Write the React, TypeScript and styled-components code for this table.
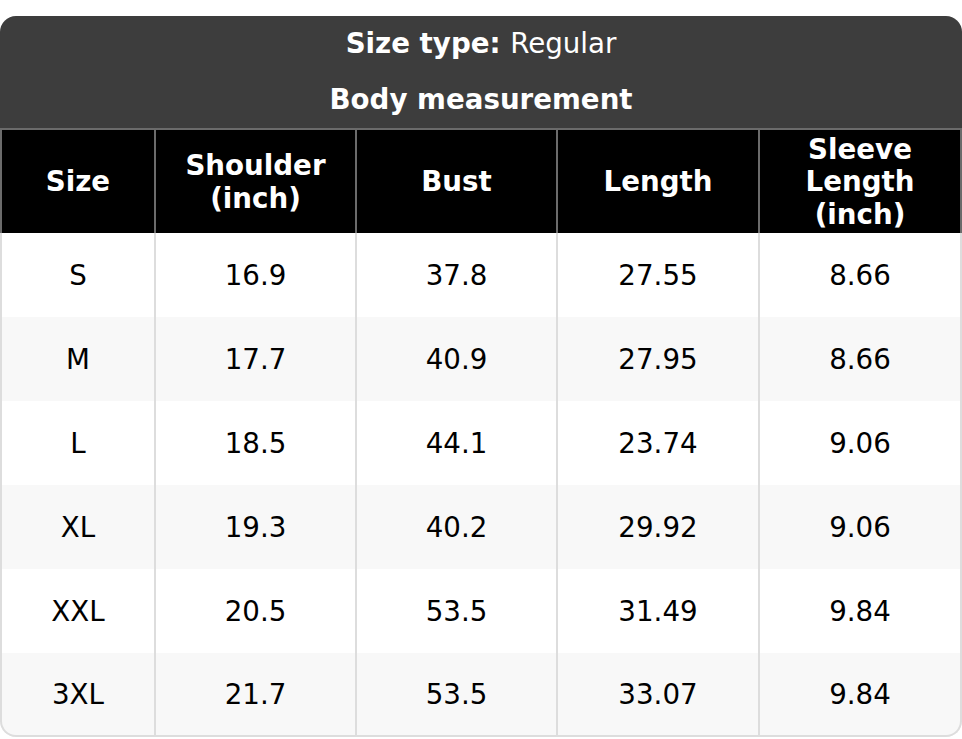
import React, { FC } from "react";
import styled, { createGlobalStyle } from "styled-components";

const GlobalStyle = createGlobalStyle`
  * {
    box-sizing: border-box;
  }
  body {
    margin: 0;
    background: #ffffff;
    font-family: "DejaVu Sans", "Liberation Sans", sans-serif;
  }
`;

const SPage = styled.div`
  padding-top: 16px;
  width: 962px;
`;

const STable = styled.table`
  width: 962px;
  table-layout: fixed;
  border-collapse: separate;
  border-spacing: 0;
  font-size: 27.7px;
  color: #000000;
`;

const STitleCell = styled.th<{ first?: boolean }>`
  background: #3d3d3d;
  color: #ffffff;
  height: 56px;
  padding: 0 10px;
  line-height: 32px;
  font-weight: 700;
  text-align: center;
  border-top-left-radius: ${({ first }) => (first ? "16px" : "0")};
  border-top-right-radius: ${({ first }) => (first ? "16px" : "0")};
  & span {
    font-weight: 400;
  }
`;

const SHeadCell = styled.th<{ first?: boolean }>`
  background: #000000;
  color: #ffffff;
  font-weight: 700;
  line-height: 32.4px;
  padding: 4px 8px 2px;
  text-align: center;
  vertical-align: middle;
  border-top: 2px solid #6b6b6b;
  border-right: 2px solid #6b6b6b;
  border-left: ${({ first }) => (first ? "2px solid #6b6b6b" : "0")};
`;

const SRow = styled.tr<{ shaded: boolean }>`
  background: ${({ shaded }) => (shaded ? "#f8f8f8" : "#ffffff")};
`;

const SCell = styled.td<{ first?: boolean; last?: boolean; bottom?: boolean }>`
  height: 84px;
  padding: 1px 8px 0;
  line-height: 32px;
  text-align: center;
  vertical-align: middle;
  border-right: 2px solid #dddddd;
  border-left: ${({ first }) => (first ? "2px solid #dddddd" : "0")};
  border-bottom: ${({ bottom }) => (bottom ? "2px solid #dddddd" : "0")};
  border-bottom-left-radius: ${({ first, bottom }) =>
    first && bottom ? "16px" : "0"};
  border-bottom-right-radius: ${({ last, bottom }) =>
    last && bottom ? "16px" : "0"};
`;

const columns = [
  { label: "Size", width: 156 },
  { label: "Shoulder (inch)", width: 201 },
  { label: "Bust", width: 201 },
  { label: "Length", width: 202 },
  { label: "Sleeve Length (inch)", width: 202 },
];

const rows: string[][] = [
  ["S", "16.9", "37.8", "27.55", "8.66"],
  ["M", "17.7", "40.9", "27.95", "8.66"],
  ["L", "18.5", "44.1", "23.74", "9.06"],
  ["XL", "19.3", "40.2", "29.92", "9.06"],
  ["XXL", "20.5", "53.5", "31.49", "9.84"],
  ["3XL", "21.7", "53.5", "33.07", "9.84"],
];

const App: FC = () => {
  return (
    <>
      <GlobalStyle />
      <SPage>
        <STable>
          <colgroup>
            {columns.map((col) => (
              <col key={col.label} style={{ width: col.width }} />
            ))}
          </colgroup>
          <thead>
            <tr>
              <STitleCell colSpan={5} first>
                Size type: <span>Regular</span>
              </STitleCell>
            </tr>
            <tr>
              <STitleCell colSpan={5}>Body measurement</STitleCell>
            </tr>
            <tr>
              {columns.map((col, i) => (
                <SHeadCell key={col.label} first={i === 0}>
                  {col.label}
                </SHeadCell>
              ))}
            </tr>
          </thead>
          <tbody>
            {rows.map((row, r) => (
              <SRow key={row[0]} shaded={r % 2 === 1}>
                {row.map((value, i) => (
                  <SCell
                    key={i}
                    first={i === 0}
                    last={i === row.length - 1}
                    bottom={r === rows.length - 1}
                  >
                    {value}
                  </SCell>
                ))}
              </SRow>
            ))}
          </tbody>
        </STable>
      </SPage>
    </>
  );
};

export default App;
